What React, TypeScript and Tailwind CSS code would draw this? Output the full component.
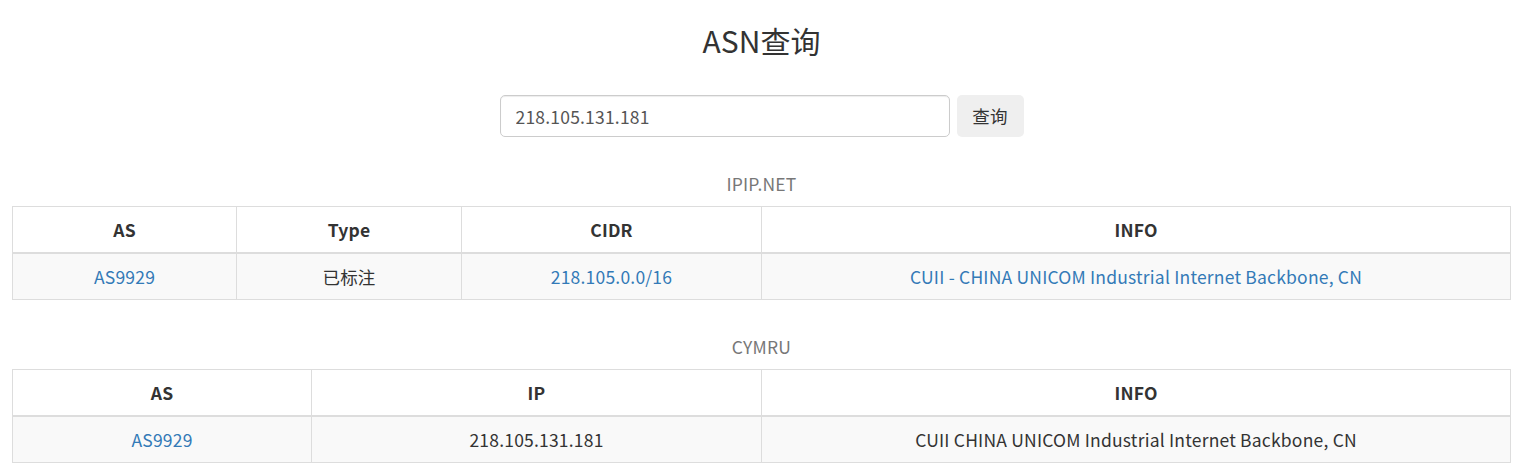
import React from 'react';

const link = 'text-[#337ab7]';

const ipip = [
  { as: 'AS9929', type: '已标注', cidr: '218.105.0.0/16', info: 'CUII - CHINA UNICOM Industrial Internet Backbone, CN' },
];

const cymru = [
  { as: 'AS9929', ip: '218.105.131.181', info: 'CUII CHINA UNICOM Industrial Internet Backbone, CN' },
];

const th = 'border border-[#ddd] border-b-[2.5px] px-[10px] py-[10px] leading-[25px] font-bold text-center';
const td = 'border border-[#ddd] px-[10px] py-[10px] leading-[25px] text-center';

const App: React.FC = () => {
  return (
    <div
      className="min-h-screen bg-white text-[#333] text-[17.5px] tracking-[0.2px]"
      style={{ fontFamily: '"Noto Sans CJK SC", "Noto Sans", sans-serif' }}
    >
      <div className="w-[1499px] ml-[12px]">
        <h3 className="text-center text-[30px] leading-[34px] pt-[23px] tracking-normal">ASN查询</h3>

        <div className="flex justify-center gap-[7px] mt-[38px]">
          <input
            defaultValue="218.105.131.181"
            className="w-[450px] h-[42px] border border-[#ccc] rounded-[5px] px-[15px] text-[17.5px] text-[#555] outline-none shadow-[inset_0_1px_1px_rgba(0,0,0,0.075)]"
          />
          <button className="h-[42px] w-[67px] rounded-[5px] bg-[#efefef] text-[#333] text-[17.5px]">查询</button>
        </div>

        <table className="w-full border-collapse mt-[34px]">
          <caption className="text-[#777] pb-[10px] leading-[25px]">IPIP.NET</caption>
          <thead>
            <tr>
              <th className={`${th} w-[224px]`}>AS</th>
              <th className={`${th} w-[225px]`}>Type</th>
              <th className={`${th} w-[300px]`}>CIDR</th>
              <th className={th}>INFO</th>
            </tr>
          </thead>
          <tbody>
            {ipip.map((r) => (
              <tr key={r.as} className="bg-[#f9f9f9]">
                <td className={`${td} ${link}`}>{r.as}</td>
                <td className={td}>{r.type}</td>
                <td className={`${td} ${link}`}>{r.cidr}</td>
                <td className={`${td} ${link}`}>{r.info}</td>
              </tr>
            ))}
          </tbody>
        </table>

        <table className="w-full border-collapse mt-[34px]">
          <caption className="text-[#777] pb-[10px] leading-[25px]">CYMRU</caption>
          <thead>
            <tr>
              <th className={`${th} w-[299px]`}>AS</th>
              <th className={`${th} w-[450px]`}>IP</th>
              <th className={th}>INFO</th>
            </tr>
          </thead>
          <tbody>
            {cymru.map((r) => (
              <tr key={r.as} className="bg-[#f9f9f9]">
                <td className={`${td} ${link}`}>{r.as}</td>
                <td className={td}>{r.ip}</td>
                <td className={td}>{r.info}</td>
              </tr>
            ))}
          </tbody>
        </table>
      </div>
    </div>
  );
};

export default App;
